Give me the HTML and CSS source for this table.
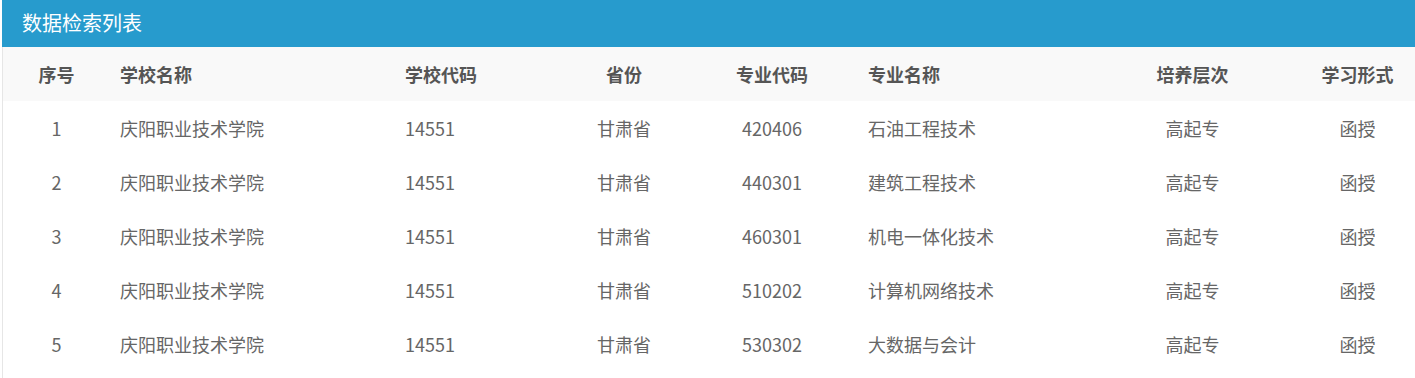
FILE: index.html
```html
<!DOCTYPE html>
<html lang="zh-CN">
<head>
<meta charset="utf-8">
<title>数据检索列表</title>
<link rel="stylesheet" href="styles.css">
</head>
<body>
<div class="panel">
  <div class="panel-title">数据检索列表</div>
  <div class="panel-body">
    <table class="list">
      <colgroup>
        <col class="c0"><col class="c1"><col class="c2"><col class="c3"><col class="c4"><col class="c5"><col class="c6"><col class="c7">
      </colgroup>
      <thead>
        <tr>
          <th class="center">序号</th>
          <th class="left">学校名称</th>
          <th class="left">学校代码</th>
          <th class="center">省份</th>
          <th class="center">专业代码</th>
          <th class="left">专业名称</th>
          <th class="center">培养层次</th>
          <th class="center">学习形式</th>
        </tr>
      </thead>
      <tbody>
        <tr><td class="center">1</td><td class="left">庆阳职业技术学院</td><td class="left">14551</td><td class="center">甘肃省</td><td class="center">420406</td><td class="left">石油工程技术</td><td class="center">高起专</td><td class="center">函授</td></tr>
        <tr><td class="center">2</td><td class="left">庆阳职业技术学院</td><td class="left">14551</td><td class="center">甘肃省</td><td class="center">440301</td><td class="left">建筑工程技术</td><td class="center">高起专</td><td class="center">函授</td></tr>
        <tr><td class="center">3</td><td class="left">庆阳职业技术学院</td><td class="left">14551</td><td class="center">甘肃省</td><td class="center">460301</td><td class="left">机电一体化技术</td><td class="center">高起专</td><td class="center">函授</td></tr>
        <tr><td class="center">4</td><td class="left">庆阳职业技术学院</td><td class="left">14551</td><td class="center">甘肃省</td><td class="center">510202</td><td class="left">计算机网络技术</td><td class="center">高起专</td><td class="center">函授</td></tr>
        <tr><td class="center">5</td><td class="left">庆阳职业技术学院</td><td class="left">14551</td><td class="center">甘肃省</td><td class="center">530302</td><td class="left">大数据与会计</td><td class="center">高起专</td><td class="center">函授</td></tr>
      </tbody>
    </table>
  </div>
</div>
</body>
</html>
```

FILE: styles.css
```css
html, body {
  margin: 0;
  padding: 0;
  background: #ffffff;
}

body {
  font-family: "Noto Sans CJK SC", "Noto Sans", sans-serif;
  color: #666666;
}

.panel {
  margin-left: 2px;
}

.panel-title {
  height: 47px;
  line-height: 45px;
  background: #279bcd;
  color: #ffffff;
  font-size: 20px;
  padding-left: 20px;
}

.panel-body {
  border-left: 1px solid #e6e6e6;
  padding-bottom: 20px;
}

.list {
  width: 100%;
  border-collapse: collapse;
  table-layout: fixed;
  font-size: 18px;
}

.c0 { width: 107px; }
.c1 { width: 285px; }
.c2 { width: 167px; }
.c3 { width: 124px; }
.c4 { width: 172px; }
.c5 { width: 227px; }
.c6 { width: 215px; }
.c7 { width: 115px; }

.list thead tr {
  background: #f9f9f9;
}

.list th {
  height: 54px;
  padding: 0;
  font-weight: bold;
  color: #555555;
}

.list td {
  height: 54px;
  padding: 0;
  color: #666666;
}

.list .left {
  text-align: left;
  padding-left: 10px;
}

.list .center {
  text-align: center;
}
```
